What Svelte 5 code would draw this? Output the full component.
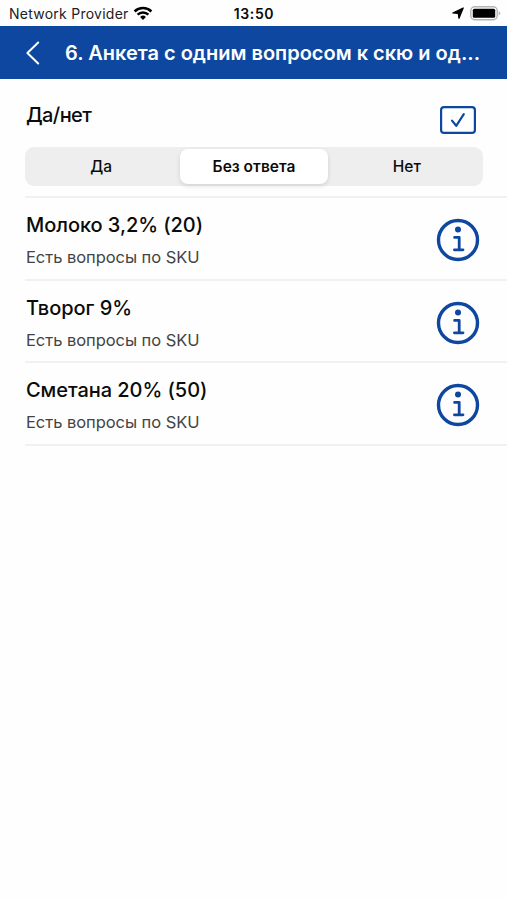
<script lang="ts">
  interface Product {
    name: string;
    note: string;
  }

  const title = '6. Анкета с одним вопросом к скю и од...';
  const options = ['Да', 'Без ответа', 'Нет'];
  const products: Product[] = [
    { name: 'Молоко 3,2% (20)', note: 'Есть вопросы по SKU' },
    { name: 'Творог 9%', note: 'Есть вопросы по SKU' },
    { name: 'Сметана 20% (50)', note: 'Есть вопросы по SKU' },
  ];

  let answer = $state('Без ответа');
</script>

<div class="screen">
  <div class="status">
    <div class="status__side">
      <span class="status__carrier">Network Provider</span>
      <svg class="status__wifi" width="20" height="15" viewBox="0 0 20 15" aria-hidden="true">
        <path d="M1.6 5.5a12.1 12.1 0 0 1 16.8 0" />
        <path d="M4.6 8.7a7.8 7.8 0 0 1 10.8 0" />
        <path d="M10 13.9 7.1 11a4.1 4.1 0 0 1 5.8 0z" class="status__wifi-dot" />
      </svg>
    </div>
    <span class="status__time">13:50</span>
    <div class="status__side status__side--end">
      <svg width="12" height="12" viewBox="0 0 12 12" aria-hidden="true">
        <path d="M11.2 1 7 11.3 6.2 6.4.8 6z" stroke="#000" stroke-width="1.2" stroke-linejoin="round" />
      </svg>
      <svg class="status__battery" width="31" height="15" viewBox="0 0 31 15" aria-hidden="true">
        <rect x=".8" y=".8" width="26.4" height="13" rx="4" fill="#fff" stroke="#b4b4b4" stroke-width="1.4" />
        <rect x="2.8" y="2.8" width="22.4" height="9" rx="1.5" />
        <path d="M28.7 5.2q1.5.7 1.5 2.1t-1.5 2.1z" fill="#b4b4b4" />
      </svg>
    </div>
  </div>

  <header class="header">
    <button class="header__back" aria-label="Назад">
      <svg width="16" height="24" viewBox="0 0 16 24" aria-hidden="true">
        <path d="M13.2 1.5 2.4 12l10.8 10.5" />
      </svg>
    </button>
    <h1 class="header__title">{title}</h1>
  </header>

  <main class="list">
    <section class="question">
      <div class="question__top">
        <h2 class="name name--question">Да/нет</h2>
        <svg class="question__icon" width="36" height="28" viewBox="0 0 36 28" aria-hidden="true">
          <rect x="1.1" y="1.1" width="33.8" height="25.8" rx="3" stroke-width="2.2" />
          <path d="m12 14.6 4.2 5.2 7.6-11.6" stroke-width="2.2" />
        </svg>
      </div>
      <div class="segments">
        {#each options as option}
          <button
            class="segments__item"
            class:segments__item--active={option === answer}
            onclick={() => (answer = option)}
          >
            {option}
          </button>
        {/each}
      </div>
    </section>

    {#each products as product}
      <section class="product">
        <div>
          <h2 class="name">{product.name}</h2>
          <p class="product__note">{product.note}</p>
        </div>
        <svg class="product__info" width="44" height="44" viewBox="0 0 44 44" aria-hidden="true">
          <circle cx="22" cy="22" r="19.5" stroke-width="3.4" />
          <circle cx="22" cy="11.6" r="3" class="product__dot" />
          <path d="M18.6 19.4h4.6v12.2M18.4 31.8h8.6" stroke-width="2.8" />
        </svg>
      </section>
    {/each}
  </main>
</div>

<style>
  :global(body) {
    background: #fff;
  }

  .screen {
    min-height: 900px;
    background: #fefefe;
    color: #0b0b0b;
    font-family: Inter, "Liberation Sans", sans-serif;
  }

  button {
    padding: 0;
    border: 0;
    background: none;
    color: inherit;
    font: inherit;
  }

  h1,
  h2,
  p {
    margin: 0;
  }

  svg {
    display: block;
    flex: none;
  }

  .status {
    display: grid;
    grid-template-columns: 1fr auto 1fr;
    align-items: center;
    box-sizing: border-box;
    height: 26px;
    padding: 0 6px 0 9px;
  }

  .status__side {
    display: flex;
    align-items: center;
    gap: 4px;
  }

  .status__side--end {
    justify-content: flex-end;
    gap: 6px;
  }

  .status__carrier {
    font-size: 14px;
    letter-spacing: 0.25px;
    color: #222;
    white-space: nowrap;
  }

  .status__wifi {
    fill: none;
    stroke: #000;
    stroke-width: 2.5;
  }

  .status__wifi-dot {
    fill: #000;
    stroke: none;
  }

  .status__time {
    margin-right: 2px;
    font-size: 14px;
    font-weight: 600;
    letter-spacing: 0.6px;
  }

  .header {
    display: flex;
    align-items: center;
    box-sizing: border-box;
    height: 53px;
    padding-left: 25px;
    background: #0e479f;
    color: #fff;
  }

  .header__back {
    width: 40px;
  }

  .header__back path {
    fill: none;
    stroke: #fff;
    stroke-width: 2;
    stroke-linecap: round;
    stroke-linejoin: round;
  }

  .header__title {
    font-size: 20px;
    font-weight: 600;
    line-height: 24px;
    white-space: nowrap;
  }

  .list {
    padding-left: 25px;
  }

  .name {
    padding-left: 1px;
    font-size: 20px;
    font-weight: 500;
    line-height: 24px;
    letter-spacing: -0.05px;
  }

  .name--question {
    letter-spacing: -0.6px;
  }

  .question {
    box-sizing: border-box;
    height: 119px;
    padding: 24px 24px 0 0;
    border-bottom: 2px solid #f1f1f1;
  }

  .question__top {
    display: flex;
    justify-content: space-between;
    height: 44px;
    padding-right: 7px;
  }

  .question__icon {
    margin-top: 3px;
    fill: none;
    stroke: #0e479f;
    stroke-linecap: round;
    stroke-linejoin: round;
  }

  .segments {
    display: grid;
    grid-template-columns: repeat(3, 1fr);
    box-sizing: border-box;
    height: 39px;
    padding: 2px;
    border-radius: 9px;
    background: #eee;
  }

  .segments__item {
    padding-bottom: 1px;
    border-radius: 8px;
    font-size: 15.5px;
    font-weight: 500;
  }

  .segments__item:first-child {
    padding-right: 3px;
  }

  .segments__item:last-child {
    padding-left: 3px;
  }

  .segments__item--active {
    margin: 0 2px;
    background: #fff;
    box-shadow: 0 2px 5px rgb(0 0 0 / 12%);
    font-weight: 600;
  }

  .product {
    display: flex;
    justify-content: space-between;
    box-sizing: border-box;
    height: 82.7px;
    padding: 15px 27px 0 0;
    border-bottom: 2px solid #f1f1f1;
  }

  .product__note {
    margin-top: 9px;
    padding-left: 1px;
    font-size: 16.5px;
    line-height: 22px;
    letter-spacing: -0.05px;
    color: #444;
  }

  .product__info {
    margin-top: 5px;
    fill: none;
    stroke: #0e479f;
    stroke-linecap: round;
    stroke-linejoin: round;
  }

  .product__dot {
    fill: #0e479f;
    stroke: none;
  }
</style>
